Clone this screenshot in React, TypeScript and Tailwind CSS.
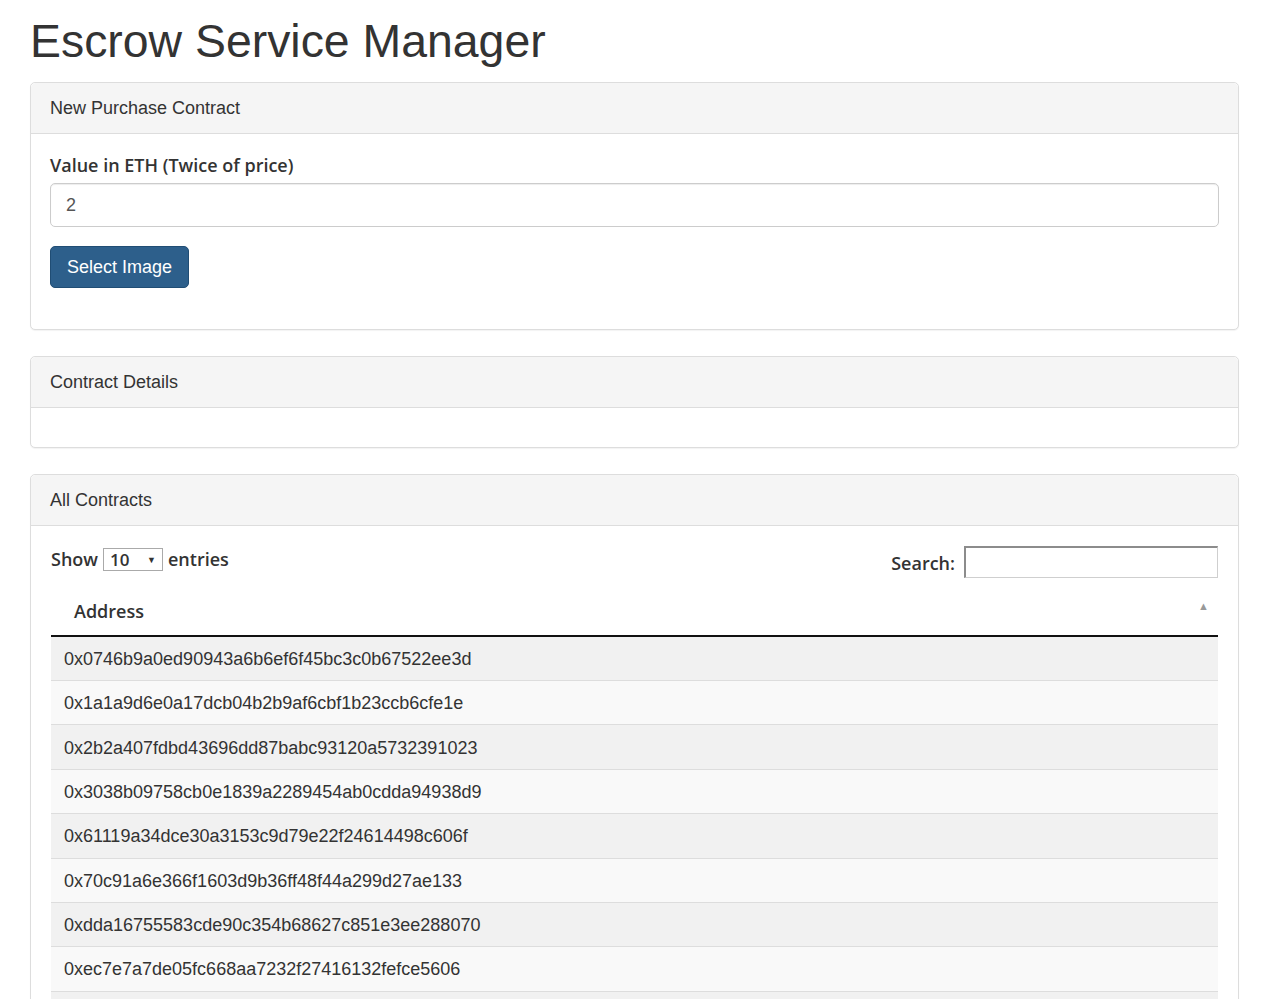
import { useState } from 'react';

const addresses = [
  '0x0746b9a0ed90943a6b6ef6f45bc3c0b67522ee3d',
  '0x1a1a9d6e0a17dcb04b2b9af6cbf1b23ccb6cfe1e',
  '0x2b2a407fdbd43696dd87babc93120a5732391023',
  '0x3038b09758cb0e1839a2289454ab0cdda94938d9',
  '0x61119a34dce30a3153c9d79e22f24614498c606f',
  '0x70c91a6e366f1603d9b36ff48f44a299d27ae133',
  '0xdda16755583cde90c354b68627c851e3ee288070',
  '0xec7e7a7de05fc668aa7232f27416132fefce5606',
  '0xf31a5c0e8d7b2a94c61e03d9b8f7e2a15c4d6b09',
  '0xfa82d41c7e90b35a6d2f18c4e07b9a3d5f6c2e81',
];

function PanelHeading({ title }: { title: string }) {
  return (
    <div className="bg-[#f5f5f5] border-b border-[#dddddd] rounded-t-[5px] h-[51px] px-[19px] flex items-center text-[18px] text-[#333]">
      {title}
    </div>
  );
}

export default function App() {
  const [value, setValue] = useState('2');

  return (
    <div className="bg-white min-h-screen font-['Liberation_Sans',Arial,sans-serif] text-[#333]">
      <div className="ml-[30px] w-[1209px]">
        <h1 className="text-[46.4px] leading-[1.1] pt-[16px] mb-[15px] text-[#333]">Escrow Service Manager</h1>

        {/* New purchase form */}
        <div className="border border-[#dddddd] rounded-[5px] bg-white mb-[26px] shadow-[0_1px_1px_rgba(0,0,0,0.05)]">
          <PanelHeading title="New Purchase Contract" />
          <div className="px-[19px] pt-[20px] pb-[21px]">
            <div className="mb-[19px]">
              <label className="block font-['Open_Sans',sans-serif] font-semibold text-[18px] leading-[22px] mb-[7px]">
                Value in ETH (Twice of price)
              </label>
              <input
                value={value}
                onChange={(e) => setValue(e.target.value)}
                className="w-full h-[44px] border border-[#cccccc] rounded-[5px] px-[15px] text-[18px] text-[#555] shadow-[inset_0_1px_1px_rgba(0,0,0,0.075)] outline-none"
              />
            </div>
            <button className="bg-[#2d5f8b] border border-[#204d74] text-white rounded-[5px] h-[42px] px-[16px] text-[18px] mb-[20px]">
              Select Image
            </button>
          </div>
        </div>

        {/* Details */}
        <div className="border border-[#dddddd] rounded-[5px] bg-white mb-[26px] shadow-[0_1px_1px_rgba(0,0,0,0.05)]">
          <PanelHeading title="Contract Details" />
          <div className="h-[39px]" />
        </div>

        {/* Contracts table */}
        <div className="border border-[#dddddd] rounded-[5px] bg-white shadow-[0_1px_1px_rgba(0,0,0,0.05)]">
          <PanelHeading title="All Contracts" />
          <div className="px-[20px] pt-[20px]">
            <div className="flex justify-between items-start font-['Open_Sans',sans-serif] font-semibold text-[18px]">
              <div className="flex items-center gap-[5px]">
                <span>Show</span>
                <div className="flex items-center justify-between w-[60px] h-[23px] border border-[#aaaaaa] px-[6px] bg-white">
                  <span className="text-[17px]">10</span>
                  <span className="text-[9px] text-[#333]">▼</span>
                </div>
                <span>entries</span>
              </div>
              <div className="flex items-center gap-[9px]">
                <span className="pt-[2px]">Search:</span>
                <input className="w-[254px] h-[32px] border border-[#cfcfcf] border-t-[#8c8c8c] border-l-[#8c8c8c] border-t-2 border-l-2 outline-none" />
              </div>
            </div>

            <table className="w-full mt-[13px] border-collapse">
              <thead>
                <tr className="border-b-2 border-[#111]">
                  <th className="text-left font-['Open_Sans',sans-serif] font-semibold text-[18px] pl-[23px] pb-[4px] h-[45px] relative">
                    Address
                    <span className="absolute right-[9px] top-[7px] text-[11px] text-[#999]">▲</span>
                  </th>
                </tr>
              </thead>
              <tbody>
                {addresses.map((a, i) => (
                  <tr key={a} className={`${i % 2 === 0 ? 'bg-[#f1f1f1]' : 'bg-[#f9f9f9]'} border-t border-[#dddddd] first:border-t-0`}>
                    <td className="h-[44.4px] pl-[13px] pt-[2px] text-[18px] text-[#333]">{a}</td>
                  </tr>
                ))}
              </tbody>
            </table>
          </div>
        </div>
      </div>
    </div>
  );
}
